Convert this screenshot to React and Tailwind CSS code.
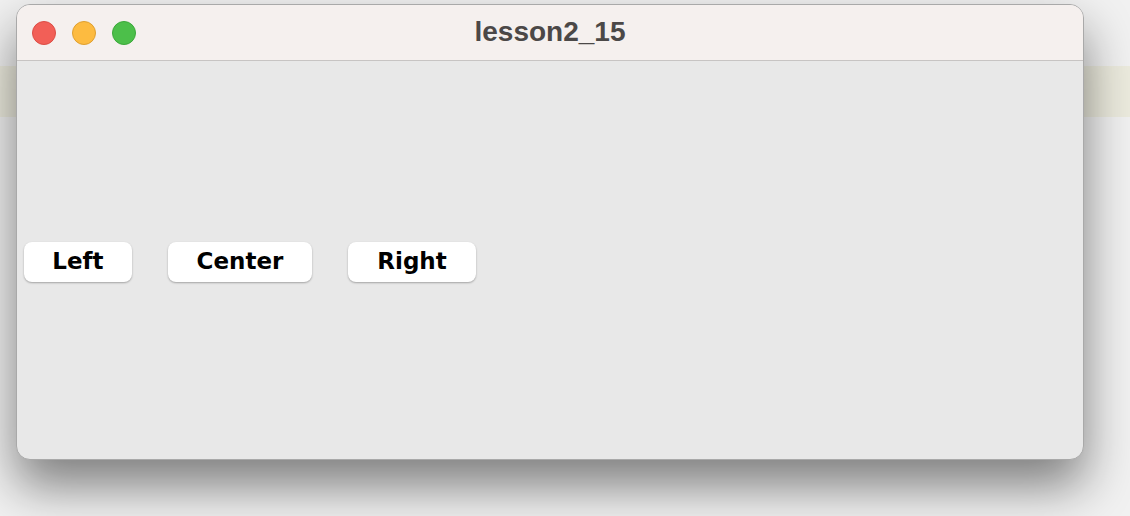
export default function App() {
  return (
    <div className="relative h-[516px] w-[1130px] overflow-hidden bg-[#f1f1f1]">
      {/* content of the page behind the window */}
      <div className="absolute left-0 right-0 top-[66px] h-[51px] bg-[#ecebde]" />

      <div className="relative ml-[16px] mt-[4px] flex h-[456px] w-[1068px] flex-col overflow-hidden rounded-[14px] border border-[#a9a9a9] bg-[#e8e8e8] shadow-[0_26px_50px_rgba(0,0,0,0.48)]">
        <div className="relative flex h-[56px] shrink-0 items-center border-b border-[#c7c4c3] bg-[#f5f0ee]">
          <div className="flex items-center gap-[16px] pl-[15px]">
            <span className="h-[24px] w-[24px] rounded-full border border-[#dc4d45] bg-[#f25f57]" />
            <span className="h-[24px] w-[24px] rounded-full border border-[#df9f2f] bg-[#fdbb40]" />
            <span className="h-[24px] w-[24px] rounded-full border border-[#3ba83a] bg-[#4cbf4a]" />
          </div>
          <div className="absolute inset-0 flex items-center justify-center pb-[1px] font-['Liberation_Sans',Arial,sans-serif] text-[28px] font-bold text-[#4b4847]">
            lesson2_15
          </div>
        </div>

        <div className="flex flex-1 items-center gap-[36px] pl-[7px] pt-[3px] font-['DejaVu_Sans',Verdana,sans-serif] text-[23px] font-bold text-black">
          <button className="flex h-[40px] w-[108px] items-center justify-center rounded-[8px] bg-white shadow-[0_1px_2px_rgba(0,0,0,0.3)]">
            Left
          </button>
          <button className="flex h-[40px] w-[144px] items-center justify-center rounded-[8px] bg-white shadow-[0_1px_2px_rgba(0,0,0,0.3)]">
            Center
          </button>
          <button className="flex h-[40px] w-[128px] items-center justify-center rounded-[8px] bg-white shadow-[0_1px_2px_rgba(0,0,0,0.3)]">
            Right
          </button>
        </div>
      </div>
    </div>
  )
}
